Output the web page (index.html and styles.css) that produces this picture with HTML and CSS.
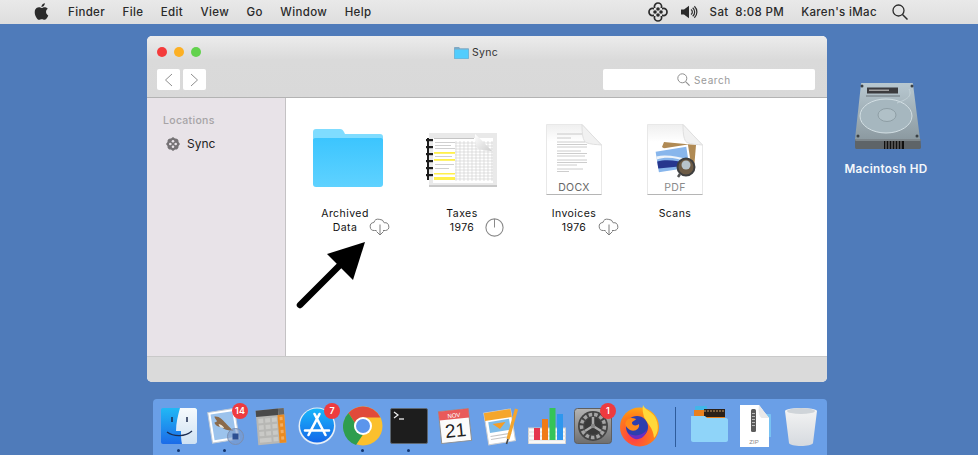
FILE: index.html
```html
<!DOCTYPE html>
<html lang="en">
<head>
<meta charset="utf-8">
<title>Sync</title>
<link rel="stylesheet" href="styles.css">
</head>
<body>
<header class="menubar">
  <svg class="apple" viewBox="3 2 18 20"><path fill="#2b2b2b" d="M18.71 19.5c-.83 1.24-1.71 2.45-3.05 2.47-1.34.03-1.77-.79-3.29-.79-1.53 0-2 .77-3.27.82-1.31.05-2.3-1.32-3.14-2.53C4.25 17 2.94 12.45 4.7 9.39c.87-1.52 2.43-2.48 4.12-2.51 1.28-.02 2.5.87 3.29.87.78 0 2.26-1.07 3.81-.91.65.03 2.47.26 3.64 1.98-.09.06-2.17 1.28-2.15 3.81.03 3.02 2.65 4.03 2.68 4.04-.03.07-.42 1.44-1.38 2.83M13 3.5c.73-.83 1.94-1.46 2.94-1.5.13 1.17-.34 2.35-1.04 3.19-.69.85-1.83 1.51-2.95 1.42-.15-1.15.41-2.35 1.05-3.11z"/></svg>
  <nav class="menus">
    <span>Finder</span><span>File</span><span>Edit</span><span>View</span><span>Go</span><span>Window</span><span>Help</span>
  </nav>
  <div class="status-items">
    <svg class="menu-sync" viewBox="0 0 20 20"><g fill="none" stroke="#2b2b2b" stroke-width="1.7"><circle cx="10" cy="4.6" r="3.6"/><circle cx="10" cy="15.4" r="3.6"/><circle cx="4.6" cy="10" r="3.6"/><circle cx="15.4" cy="10" r="3.6"/></g><path fill="#e2e2e2" d="M6 6h8v8H6z"/><g fill="#2b2b2b"><circle cx="10" cy="7" r="1.8"/><circle cx="10" cy="13" r="1.8"/><circle cx="7" cy="10" r="1.8"/><circle cx="13" cy="10" r="1.8"/></g><circle cx="10" cy="10" r="1.2" fill="#e2e2e2"/></svg>
    <svg class="speaker" viewBox="0 0 17 14"><path fill="#2b2b2b" d="M0 4.5h3L8 .8v12.4L3 9.5H0z"/><g fill="none" stroke="#2b2b2b" stroke-width="1.2"><path d="M10 4.5a3 3 0 0 1 0 5"/><path d="M11.7 2.8a5.5 5.5 0 0 1 0 8.4"/><path d="M13.4 1.2a8 8 0 0 1 0 11.6"/></g></svg>
    <span class="clock">Sat&nbsp; 8:08 PM</span>
    <span class="user">Karen's iMac</span>
    <svg class="menu-search" viewBox="0 0 16 16"><circle cx="6.5" cy="6.5" r="5.5" fill="none" stroke="#2b2b2b" stroke-width="1.3"/><path d="M10.5 10.5l5 5" stroke="#2b2b2b" stroke-width="1.5"/></svg>
  </div>
</header>

<main class="desktop">
  <section class="window">
    <div class="titlebar">
      <div class="lights"><i class="light red"></i><i class="light amber"></i><i class="light green"></i></div>
      <div class="title">
        <svg class="title-folder" viewBox="0 0 15 12"><path fill="#7fa9c4" d="M0 1.2C0 .5.4 0 1 0h4l1 1.2h8c.6 0 1 .4 1 1V11c0 .6-.4 1-1 1H1c-.6 0-1-.4-1-1z"/><path fill="#52cdfd" d="M.6 2.4h13.800V11c0 .3-.2.5-.5.5H1.100c-.3 0-.5-.2-.5-.5z"/></svg>
        <span>Sync</span>
      </div>
      <div class="toolbar">
        <div class="nav-buttons">
          <button class="nav-button" type="button"><svg viewBox="0 0 9 14"><path d="M8 1L1.500 7 8 13" fill="none" stroke="#8e8e8e" stroke-width="1"/></svg></button>
          <button class="nav-button" type="button"><svg viewBox="0 0 9 14"><path d="M1 1l6.500 6L1 13" fill="none" stroke="#8e8e8e" stroke-width="1"/></svg></button>
        </div>
        <div class="search">
          <svg viewBox="0 0 13 13"><circle cx="5.300" cy="5.300" r="4.500" fill="none" stroke="#8f8f8f" stroke-width="1"/><path d="M8.600 8.600l4 4" stroke="#8f8f8f" stroke-width="1.200"/></svg>
          <span>Search</span>
        </div>
      </div>
    </div>
    <div class="window-body">
      <aside class="sidebar">
        <h2 class="side-heading">Locations</h2>
        <div class="side-item">
          <svg viewBox="0 0 14 14"><path fill="#757275" d="M7 0l2 1.500a3 3 0 0 1 3.500 3.500L14 7l-1.500 2A3 3 0 0 1 9 12.500L7 14l-2-1.500A3 3 0 0 1 1.500 9L0 7l1.500-2A3 3 0 0 1 5 1.500z"/><g fill="#e8e3e8"><circle cx="7" cy="4.300" r="1.300"/><circle cx="7" cy="9.700" r="1.300"/><circle cx="4.300" cy="7" r="1.300"/><circle cx="9.700" cy="7" r="1.300"/></g></svg>
          <span>Sync</span>
        </div>
      </aside>
      <div class="files">
        <figure class="file file-a">
          <div class="file-icon">
            <svg class="i-folder" viewBox="0 0 70 58"><defs><linearGradient id="fold" x1="0" y1="0" x2="0" y2="1"><stop offset="0" stop-color="#3cc5fe"/><stop offset="1" stop-color="#5fd2ff"/></linearGradient></defs><path fill="#7fdcff" d="M0 3C0 1 1 0 3 0h24c2 0 3 1 4 3l1 2h35c2 0 3 1 3 3v8H0z"/><path fill="url(#fold)" d="M0 11c0-1 1-2 2-2h66c1 0 2 1 2 2v44c0 2-1 3-3 3H3c-2 0-3-1-3-3z"/></svg>
          </div>
          <figcaption class="label"><span class="line">Archived</span><span class="line">Data<svg class="badge-cloud" viewBox="0 0 22 18"><g fill="none" stroke="#7d7d7d" stroke-width="1"><path d="M7.500 12.500H5.500a4 4 0 0 1-.6-8 4.500 4.500 0 0 1 5.300-3.200 5 5 0 0 1 5 3.500 3.900 3.900 0 0 1 1.400 7.700h-2.600"/><path d="M11 6.500v10.500M7.500 13.500L11 17l3.500-3.500"/></g></svg></span></figcaption>
        </figure>
        <figure class="file file-b">
          <div class="file-icon">
            <svg class="i-sheet" viewBox="0 0 72 54"><defs><linearGradient id="curl" x1="0" y1="0" x2="1" y2="1"><stop offset="0" stop-color="#fff"/><stop offset="1" stop-color="#cfcfcf"/></linearGradient></defs><rect x="3" y="0" width="68" height="53" fill="#e9e9e9"/><rect x="3" y="52" width="68" height="2" fill="#c9c9c9"/><rect x="7" y="5" width="60" height="45" fill="#fff"/><path d="M8 5.500h40" stroke="#b5b5b5" stroke-width=".8"/><g fill="#cfcfcf"><rect x="9" y="9" width="20" height="1"/><rect x="9" y="12" width="16" height="1"/><rect x="9" y="15" width="20" height="1"/><rect x="9" y="23" width="17" height="1"/><rect x="9" y="31" width="19" height="1"/><rect x="9" y="35" width="14" height="1"/></g><g fill="#fff04a"><rect x="8" y="19" width="21" height="1.800"/><rect x="8" y="26" width="21" height="1.800"/><rect x="8" y="40" width="21" height="1.500"/><rect x="8" y="44" width="21" height="3"/></g><g stroke="#d2d2d2" stroke-width=".7"><path d="M30 8v40M34 8v40M38 8v40M42 8v40M46 8v40M50 8v40M54 8v40M58 8v40M62 8v40M66 8v40"/><path d="M29 10h38M29 13h38M29 16h38M29 19h38M29 22h38M29 25h38M29 28h38M29 31h38M29 34h38M29 37h38M29 40h38M29 43h38M29 46h38"/></g><path fill="url(#curl)" d="M49 1c0 9 1 14 4 15 3 1 10 2 13 2C60 12 55 6 49 1z"/><rect x="1" y="5" width="2" height="42" fill="#1d1d1d"/><g fill="#1d1d1d"><rect x="0" y="6" width="7" height="2.200"/><rect x="0" y="13" width="7" height="2.200"/><rect x="0" y="20" width="7" height="2.200"/><rect x="0" y="27" width="7" height="2.200"/><rect x="0" y="34" width="7" height="2.200"/><rect x="0" y="41" width="7" height="2.200"/></g></svg>
          </div>
          <figcaption class="label"><span class="line">Taxes</span><span class="line">1976<svg class="badge-progress" viewBox="0 0 19 19"><circle cx="9.500" cy="9.500" r="8.600" fill="none" stroke="#8a8a8a" stroke-width="1.100"/><path d="M9.500 1v8.500" stroke="#8a8a8a" stroke-width="1"/></svg></span></figcaption>
        </figure>
        <figure class="file file-c">
          <div class="file-icon">
            <svg class="i-doc" viewBox="0 0 56 71"><defs><linearGradient id="pg" x1="0" y1="0" x2="0" y2="1"><stop offset="0" stop-color="#efefef"/><stop offset=".25" stop-color="#fff"/></linearGradient></defs><path fill="url(#pg)" stroke="#e8e8e8" d="M.5.500H36L55.500 21v49.500H.5z"/><path fill="#f1f1f1" stroke="#dfdfdf" d="M36 .5c0 10 1 16 4 18 4 2 11 2 15.500 2.500z"/><path d="M.5 70.500h55" stroke="#b5b5b5"/><g stroke="#a3a3a3" stroke-width=".55"><path d="M11 10h25M11 14h14M11 18h28M11 20.500h30M11 23h30M11 27h24M11 29.500h30M11 32h28M11 36h30M11 38.500h30M11 41h20M11 45h26M11 47.500h12"/></g><text class="doc-tag" x="28" y="66.500" text-anchor="middle">DOCX</text></svg>
          </div>
          <figcaption class="label"><span class="line">Invoices</span><span class="line">1976<svg class="badge-cloud" viewBox="0 0 22 18"><g fill="none" stroke="#7d7d7d" stroke-width="1"><path d="M7.500 12.500H5.500a4 4 0 0 1-.6-8 4.500 4.500 0 0 1 5.300-3.200 5 5 0 0 1 5 3.500 3.900 3.900 0 0 1 1.400 7.700h-2.600"/><path d="M11 6.500v10.500M7.500 13.500L11 17l3.500-3.500"/></g></svg></span></figcaption>
        </figure>
        <figure class="file file-d">
          <div class="file-icon">
            <svg class="i-doc" viewBox="0 0 56 71"><path fill="url(#pg)" stroke="#e8e8e8" d="M.5.500H36L55.500 21v49.500H.5z"/><path fill="#f1f1f1" stroke="#dfdfdf" d="M36 .5c0 10 1 16 4 18 4 2 11 2 15.500 2.500z"/><path d="M.5 70.500h55" stroke="#b5b5b5"/><path fill="#b08a54" d="M15 23l2-5 32 3-2 24z"/><g transform="rotate(-9 26 35)"><rect x="8" y="23" width="35" height="25" fill="#fff"/><rect x="10" y="25" width="31" height="21" fill="#88b6ec"/><path fill="#eef4fa" d="M10 33c9-2 20 1 31 8v-3c-9-4-21-9-31-8z"/><path fill="#26368e" d="M10 35c9-1 20 2 31 7v2l-31-2z"/></g><circle cx="39" cy="43" r="8.500" fill="#6d5b45" stroke="#3f3f3f" stroke-width="2"/><circle cx="39" cy="41" r="4.500" fill="#b7c3cb"/><path d="M33 50l-2 3" stroke="#555" stroke-width="2.500"/><text class="doc-tag pdf-tag" x="28" y="66.500" text-anchor="middle">PDF</text></svg>
          </div>
          <figcaption class="label"><span class="line">Scans</span></figcaption>
        </figure>
        <svg class="arrow" viewBox="0 0 70 72"><path d="M4 68L46 26" stroke="#000" stroke-width="6.500" stroke-linecap="round"/><path d="M69 5L31 17 57 43z" fill="#000"/></svg>
      </div>
    </div>
    <div class="statusbar"></div>
  </section>

  <figure class="disk">
    <svg viewBox="0 0 66 67"><defs><linearGradient id="hd" x1="0" y1="0" x2="0" y2="1"><stop offset="0" stop-color="#b8c8d0"/><stop offset="1" stop-color="#8c9aa1"/></linearGradient></defs><path fill="url(#hd)" d="M6 1c0-.6.4-1 1-1h50c.6 0 1 .4 1 1l7 55H0z"/><path fill="#5e6468" d="M0 56h65.500l.5 8c0 1-.5 2-1.500 2h-63c-1 0-1.500-1-1.500-2z"/><path fill="#7d868b" d="M0 56h65.500v2H.5z"/><rect x="29" y="58" width="20" height="8" fill="#111"/><g stroke="#8a8a8a" stroke-width="1"><path d="M31 58v8M34 58v8M37 58v8M40 58v8M43 58v8M46 58v8"/></g><rect x="12" y="4.500" width="31" height="6" fill="#3b3b3e"/><rect x="14" y="6.500" width="20" height="1.500" fill="#a0a0a0"/><path d="M11 13h34" stroke="#6b757a"/><ellipse cx="31" cy="33" rx="26" ry="17" fill="#a6b7bf" stroke="#d3dfe4"/><ellipse cx="32" cy="32" rx="9" ry="6.500" fill="#b0c0c7" stroke="#8e9ea5"/><path d="M42 20c8-3 16-6 12-14" fill="none" stroke="#c4d2d8"/><g fill="#3a4044"><circle cx="7" cy="3" r="1.500"/><circle cx="57" cy="3" r="1.500"/><circle cx="3" cy="53" r="1.500"/><circle cx="62" cy="53" r="1.500"/></g></svg>
    <figcaption>Macintosh HD</figcaption>
  </figure>
</main>

<footer class="dock">
  <div class="dock-item has-dot">
    <svg class="app-finder" viewBox="0 0 36 36"><defs><linearGradient id="fl" x1="0" y1="0" x2="0" y2="1"><stop offset="0" stop-color="#21b8f5"/><stop offset="1" stop-color="#1c6be8"/></linearGradient><linearGradient id="fr" x1="0" y1="0" x2="0" y2="1"><stop offset="0" stop-color="#f6fafd"/><stop offset="1" stop-color="#cfe2f3"/></linearGradient></defs><rect width="36" height="36" rx="2" fill="url(#fl)"/><path fill="url(#fr)" d="M19 0h15c1 0 2 1 2 2v32c0 1-1 2-2 2H21c-1-4-1-8-1-13h-5c0-8 2-16 4-23z"/><g stroke="#1c2c50" stroke-width="1.500" fill="none"><path d="M11 9v5M26 9v5"/><path d="M6 24c7 5 18 5 25-1" stroke-width="1.300"/></g></svg>
    <i class="dot"></i>
  </div>
  <div class="dock-item has-dot">
    <svg class="app-mail" viewBox="0 0 38 39"><g transform="rotate(-9 19 19)"><rect x="4" y="3" width="27" height="31" fill="#fff" stroke="#bfcad6"/><rect x="6.500" y="5.500" width="22" height="26" fill="#9cc3ec"/><path fill="#8a6a4a" d="M10 8c5 0 7 4 10 8 2 3 4 6 7 9-6-1-10-3-12-6-3 0-5-2-6-5l3-1c-1-2-2-3-2-5z"/><path fill="#efe7d6" d="M13 16c2 1 4 2 5 5l-3-1c-1-1-2-2-2-4z"/></g><circle cx="29.500" cy="29.500" r="8" fill="#7b9bcb" fill-opacity=".6" stroke="#7b8eaf"/><rect x="26.500" y="26.500" width="6" height="6" fill="#2c4f92"/></svg>
    <b class="badge">14</b>
    <i class="dot"></i>
  </div>
  <div class="dock-item">
    <svg class="app-calc" viewBox="0 0 36 36" preserveAspectRatio="none"><g transform="rotate(-5 18 18)"><rect x="3" y="2" width="29" height="32" fill="#b7b7b4"/><rect x="3" y="2" width="23" height="6" fill="#4a4a4a"/><rect x="26" y="2" width="6" height="6" fill="#666"/><rect x="25" y="8" width="7" height="26" fill="#ea8b22"/><g fill="#c9c9c6"><rect x="5" y="10" width="5" height="4"/><rect x="12" y="10" width="5" height="4"/><rect x="19" y="10" width="5" height="4"/><rect x="5" y="16" width="5" height="4"/><rect x="12" y="16" width="5" height="4"/><rect x="19" y="16" width="5" height="4"/><rect x="5" y="22" width="5" height="4"/><rect x="12" y="22" width="5" height="4"/><rect x="19" y="22" width="5" height="4"/><rect x="5" y="28" width="12" height="4"/><rect x="19" y="28" width="5" height="4"/></g><g fill="#f3ae62"><rect x="27" y="10" width="3" height="3"/><rect x="27" y="16" width="3" height="3"/><rect x="27" y="22" width="3" height="3"/><rect x="27" y="28" width="3" height="3"/></g></g></svg>
  </div>
  <div class="dock-item">
    <svg class="app-store" viewBox="0 0 38 38"><defs><linearGradient id="as" x1="0" y1="0" x2="0" y2="1"><stop offset="0" stop-color="#19b6fb"/><stop offset="1" stop-color="#1467e8"/></linearGradient></defs><circle cx="19" cy="19" r="18.500" fill="#e6eef6"/><circle cx="19" cy="18.500" r="17" fill="url(#as)"/><g stroke="#fff" stroke-width="2.600" stroke-linecap="round"><path d="M21.500 7L10.500 28M16.500 7l11 21M7 23.500h24"/></g></svg>
    <b class="badge">7</b>
  </div>
  <div class="dock-item has-dot">
    <svg class="app-chrome" viewBox="0 0 40 40"><circle cx="20" cy="20" r="19.500" fill="#fbc02d"/><path fill="#e04a3a" d="M20 .500A19.500 19.500 0 0 1 37.400 11.500H20a8.500 8.500 0 0 0-8 5.500L5.500 7A19.500 19.500 0 0 1 20 .500z"/><path fill="#2e9d4f" d="M5.500 7L12 17a8.500 8.500 0 0 0 8 11.500l-7 10.500A19.500 19.500 0 0 1 5.500 7z"/><circle cx="20" cy="20" r="9" fill="#fff"/><circle cx="20" cy="20" r="7" fill="#5b95ec"/></svg>
    <i class="dot"></i>
  </div>
  <div class="dock-item has-dot">
    <svg class="app-term" viewBox="0 0 38 36"><rect x=".5" y=".5" width="37" height="35" rx="1.500" fill="#1d1d1d" stroke="#5b6672"/><path d="M4 4l4 3-4 3" fill="none" stroke="#eee" stroke-width="1.200"/><path d="M9 11h5" stroke="#eee" stroke-width="1.300"/></svg>
    <i class="dot"></i>
  </div>
  <div class="dock-item">
    <svg class="app-cal" viewBox="0 0 36 38"><g transform="rotate(-6 18 19)"><rect x="3" y="3" width="30" height="32" fill="#fbfbfb" stroke="#8f8f8f"/><path fill="#e85a5a" d="M3 3h30v9H3z"/><text class="cal-month" x="18" y="10.500" text-anchor="middle">NOV</text><text class="cal-day" x="18" y="30" text-anchor="middle">21</text></g></svg>
  </div>
  <div class="dock-item">
    <svg class="app-pages" viewBox="0 0 36 40"><g transform="rotate(-9 16 20)"><rect x="3" y="5" width="27" height="32" fill="#fff" stroke="#d0d0d0"/><path fill="#f5a62c" d="M3 5h27v8H3z"/><rect x="6" y="14.500" width="21" height="11" fill="#7cbbe8"/><path fill="#f59d23" d="M10 17h13l-6.500 6z"/><path stroke="#c5c5c5" d="M6 29h21M6 32h16"/></g><path d="M33.500 3L25 33" stroke="#f3a52e" stroke-width="3.200"/><path d="M25 33l-1.500 5" stroke="#444" stroke-width="1.600"/></svg>
  </div>
  <div class="dock-item">
    <svg class="app-num" viewBox="0 0 38 36"><rect x=".5" y="20" width="37" height="16" fill="#f8f8f8" stroke="#d0d0d0"/><path stroke="#dcdcdc" d="M0 24h38M0 28h38M0 32h38"/><rect x="6" y="20" width="6" height="12" fill="#e5354c"/><rect x="14" y="11" width="6" height="21" fill="#f07b17"/><rect x="21.500" y="0" width="6" height="32" fill="#35c458"/><rect x="29" y="6" width="6" height="26" fill="#2e97ee"/></svg>
  </div>
  <div class="dock-item">
    <svg class="app-prefs" viewBox="0 0 38 36"><defs><linearGradient id="pr" x1="0" y1="0" x2="0" y2="1"><stop offset="0" stop-color="#b4b4b4"/><stop offset="1" stop-color="#6e6e6e"/></linearGradient></defs><rect x=".5" y=".5" width="37" height="35" rx="3" fill="url(#pr)" stroke="#5f5f5f"/><circle cx="19" cy="18" r="15" fill="#444"/><circle cx="19" cy="18" r="11.500" fill="none" stroke="#a4a4a4" stroke-width="3.500" stroke-dasharray="3.500 2"/><circle cx="19" cy="18" r="8.500" fill="#3a3a3a"/><g stroke="#aaa" stroke-width="2.500"><path d="M19 18V9M19 18l8 5M19 18l-8 5"/></g><circle cx="19" cy="18" r="2.200" fill="#888"/></svg>
    <b class="badge">1</b>
  </div>
  <div class="dock-item">
    <svg class="app-fox" viewBox="0 0 41 42"><defs><radialGradient id="ff" cx=".35" cy=".75" r=".85"><stop offset="0" stop-color="#ff3a4a"/><stop offset=".6" stop-color="#ff7b1a"/><stop offset="1" stop-color="#ffb414"/></radialGradient></defs><circle cx="20.500" cy="22" r="19.500" fill="url(#ff)"/><path fill="#ffd83a" d="M24 0c2 5 9 7 12 12 4 7 4 16-1 21-1-11-7-14-10-21-1-4-2-8-1-12z"/><circle cx="18" cy="22" r="11" fill="#2d3fae"/><path fill="#6c2ec2" d="M9 28c6 4 14 3 19-3-2 7-7 10-12 9-3-1-5-3-7-6z"/><path fill="#ff8a1a" d="M8 15c3-3 6-2 9-1-1 2-4 2-4 4 0 3 5 3 7 1 1 5-4 8-9 6-5-3-6-7-3-10z"/></svg>
  </div>
  <i class="dock-sep"></i>
  <div class="dock-item">
    <svg class="app-stack" viewBox="0 0 37 36"><rect x="4" y="0" width="12" height="8" rx="1" fill="#42b6e8"/><rect x="3" y="4" width="31" height="8" fill="#e8801e"/><rect x="13" y="3" width="21" height="8" fill="#2b2018"/><path stroke="#c99a64" stroke-dasharray="2 1" d="M13 5h21"/><path fill="#8fd4f9" d="M0 10h14l2 2h19c1 0 2 1 2 2v20c0 1-1 2-2 2H2c-1 0-2-1-2-2z"/></svg>
  </div>
  <div class="dock-item">
    <svg class="app-zip" viewBox="0 0 32 42"><path fill="#78c2f2" d="M16 9h15c.6 0 1 .4 1 1v22H16z"/><path fill="#fff" d="M1 0h19l10 13v29H1z"/><path fill="#e9e9e9" d="M20 0c-1 6 0 12 3 13h7z"/><rect x="12" y="4" width="5" height="23" rx="1.500" fill="#5b5b5b"/><g fill="#b9b9b9"><rect x="13" y="8" width="3" height="1"/><rect x="13" y="11" width="3" height="1"/><rect x="13" y="14" width="3" height="1"/><rect x="13" y="17" width="3" height="1"/><rect x="13" y="20" width="3" height="1"/></g><text class="zip-tag" x="15" y="39" text-anchor="middle">ZIP</text></svg>
  </div>
  <div class="dock-item">
    <svg class="app-trash" viewBox="0 0 32 40"><defs><linearGradient id="tr" x1="0" y1="0" x2="0" y2="1"><stop offset="0" stop-color="#f4f4f4"/><stop offset="1" stop-color="#d6dadf"/></linearGradient></defs><path fill="url(#tr)" d="M0 5C1 1 31 1 32 5l-4 32c-1 4-23 4-24 0z"/><ellipse cx="16" cy="5" rx="14" ry="3" fill="#cfd4d9"/></svg>
  </div>
</footer>
</body>
</html>
```

FILE: styles.css
```css
* { box-sizing: border-box; }

html, body {
  margin: 0;
  height: 455px;
  overflow: hidden;
}

body {
  display: flex;
  flex-direction: column;
  background: #4f7bba;
  font-family: Inter, "Liberation Sans", sans-serif;
  color: #2a2a2a;
}

/* Menu bar */
.menubar {
  flex: none;
  height: 24px;
  display: flex;
  align-items: center;
  padding: 0 70px 0 34px;
  background: linear-gradient(#e9e9e9, #dedede);
  font-size: 11.5px;
  font-weight: 500;
  letter-spacing: .35px;
}

.apple { width: 15px; height: 17px; margin-top: -2px; }

.menus {
  display: flex;
  gap: 17.5px;
  margin-left: 19px;
}

.status-items {
  display: flex;
  align-items: center;
  margin-left: auto;
}

.menu-sync { width: 20px; height: 20px; }
.speaker { width: 17px; height: 14px; margin-left: 13px; }
.clock { margin-left: 12px; white-space: nowrap; }
.user { margin-left: 17px; white-space: nowrap; }
.menu-search { width: 16px; height: 16px; margin-left: 15px; }

/* Desktop */
.desktop {
  flex: none;
  height: 358px;
  display: flex;
  align-items: flex-start;
  padding: 12px 0 0 147px;
}

.window {
  flex: none;
  width: 680px;
  height: 346px;
  display: flex;
  flex-direction: column;
  border-radius: 5px;
  overflow: hidden;
  background: #fff;
}

.titlebar {
  flex: none;
  position: relative;
  height: 62px;
  padding: 0 12px 0 10px;
  background: linear-gradient(#ececec 0, #dadada 24px, #d9d9d9 100%);
  border-bottom: 1px solid #b3b3b3;
}

.lights {
  position: absolute;
  left: 10px;
  top: 11px;
  display: flex;
  gap: 7px;
}

.light { width: 10px; height: 10px; border-radius: 50%; }
.red { background: #f43b3b; }
.amber { background: #fcb024; }
.green { background: #62d24d; }

.title {
  display: flex;
  justify-content: center;
  align-items: center;
  gap: 3px;
  height: 33px;
  padding-right: 20px;
  font-size: 10.5px;
  letter-spacing: .25px;
  color: #333;
}

.title-folder { width: 15px; height: 12px; }

.toolbar {
  display: flex;
  justify-content: space-between;
}

.nav-buttons { display: flex; gap: 3px; }

.nav-button {
  width: 23px;
  height: 21px;
  padding: 0;
  border: 0;
  border-radius: 2px;
  background: #fff;
  display: flex;
  align-items: center;
  justify-content: center;
}

.nav-button svg { width: 9px; height: 14px; }

.search {
  width: 212px;
  height: 21px;
  padding-right: 10px;
  border-radius: 2px;
  background: #fff;
  display: flex;
  align-items: center;
  justify-content: center;
  gap: 4px;
  font-size: 10px;
  letter-spacing: .6px;
  color: #9a9a9a;
}

.search svg { width: 13px; height: 13px; }

.window-body {
  flex: 1;
  display: flex;
  min-height: 0;
}

.sidebar {
  flex: none;
  width: 139px;
  padding: 16px 0 0 16px;
  background: #e8e3e8;
  border-right: 1px solid #c4c2c4;
}

.side-heading {
  margin: 0;
  font-size: 10.5px;
  line-height: 14px;
  font-weight: 500;
  letter-spacing: .3px;
  color: #a6a3a6;
}

.side-item {
  display: flex;
  align-items: center;
  gap: 7px;
  margin-top: 8px;
  padding-left: 3px;
  font-size: 12px;
  line-height: 16px;
  color: #222;
}

.side-item svg { width: 14px; height: 14px; }

.files {
  flex: 1;
  position: relative;
  display: flex;
  align-items: flex-start;
  padding: 26px 0 0 5px;
  background: #fff;
}

.file {
  flex: none;
  margin: 0;
  display: flex;
  flex-direction: column;
  align-items: center;
}

.file-a, .file-b { width: 114px; }
.file-c { width: 110px; }
.file-d { width: 92px; }

.file-icon {
  height: 71px;
  display: flex;
  align-items: flex-end;
  justify-content: center;
}

.i-folder { width: 70px; height: 58px; margin-bottom: 8px; }
.i-sheet { width: 72px; height: 54px; margin-bottom: 8px; }
.i-doc { width: 56px; height: 71px; }

.label {
  margin-top: 12px;
  display: flex;
  flex-direction: column;
  align-items: center;
  font-size: 10.5px;
  line-height: 14px;
  letter-spacing: .45px;
  color: #111;
  text-align: center;
}

.file-a .label { margin-right: 6px; }

.line { position: relative; display: block; white-space: nowrap; }

.badge-cloud {
  position: absolute;
  left: calc(100% + 12px);
  top: -3px;
  width: 22px;
  height: 18px;
}

.badge-progress {
  position: absolute;
  left: calc(100% + 11px);
  top: -3px;
  width: 19px;
  height: 19px;
}

.doc-tag {
  font-size: 10.5px;
  letter-spacing: .3px;
  fill: #666;
  font-family: Inter, "Liberation Sans", sans-serif;
}

.pdf-tag { fill: #8a8a8a; }

.arrow {
  position: absolute;
  left: 10px;
  top: 139px;
  width: 70px;
  height: 72px;
}

.statusbar {
  flex: none;
  height: 26px;
  background: #dadada;
  border-top: 1px solid #c9c9c9;
}

/* Desktop volume */
.disk {
  flex: none;
  width: 100px;
  margin: 47px 0 0 9px;
  display: flex;
  flex-direction: column;
  align-items: center;
}

.disk svg { width: 66px; height: 67px; margin-left: 3px; }

.disk figcaption {
  margin-top: 12px;
  color: #f4f7fb;
  font-size: 11.7px;
  font-weight: 600;
  letter-spacing: .3px;
  white-space: nowrap;
}

/* Dock */
.dock {
  flex: none;
  width: 674px;
  height: 56px;
  margin: 17px 0 0 153px;
  padding: 6px 0 0 3px;
  display: flex;
  align-items: flex-start;
  background: #6a9fe7;
  border-radius: 4px 4px 0 0;
}

.dock-item {
  position: relative;
  flex: none;
  width: 46px;
  height: 42px;
  display: flex;
  align-items: center;
  justify-content: center;
}

.app-finder { width: 36px; height: 36px; }
.app-mail { width: 38px; height: 39px; }
.app-calc { width: 35px; height: 39px; }
.app-store { width: 38px; height: 38px; }
.app-chrome { width: 40px; height: 40px; }
.app-term { width: 38px; height: 36px; }
.app-cal { width: 36px; height: 38px; }
.app-pages { width: 36px; height: 40px; }
.app-num { width: 38px; height: 36px; }
.app-prefs { width: 38px; height: 36px; }
.app-fox { width: 41px; height: 42px; }
.app-stack { width: 37px; height: 36px; margin-bottom: 4px; }
.app-zip { width: 32px; height: 42px; }
.app-trash { width: 32px; height: 40px; }

.dot {
  position: absolute;
  left: 21px;
  top: 44px;
  width: 3px;
  height: 3px;
  border-radius: 50%;
  background: #12356e;
}

.badge {
  position: absolute;
  right: 0;
  top: -2px;
  min-width: 16px;
  height: 16px;
  padding: 0 3px;
  border-radius: 8px;
  background: #ee3b3f;
  color: #fff;
  font-size: 9px;
  font-weight: 600;
  line-height: 16px;
  text-align: center;
}

.dock-sep {
  flex: none;
  width: 1px;
  height: 40px;
  margin: 2px 10px 0 13px;
  background: #2e5c9c;
}

.cal-month { font-size: 6px; fill: #fff; font-family: "Liberation Sans", sans-serif; }
.cal-day { font-size: 19px; fill: #222; font-family: "Liberation Sans", sans-serif; }
.zip-tag { font-size: 6px; fill: #888; font-family: "Liberation Sans", sans-serif; }
```
